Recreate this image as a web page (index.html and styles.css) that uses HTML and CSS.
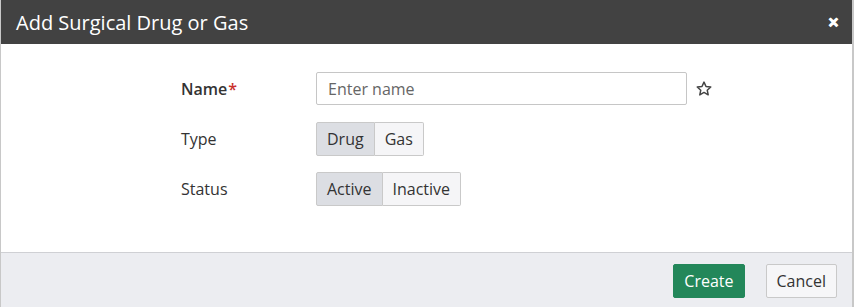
FILE: index.html
```html
<!DOCTYPE html>
<html>
<head>
<meta charset="utf-8">
<link rel="stylesheet" href="styles.css">
</head>
<body>
<div class="dialog">
  <div class="header">
    <span class="title">Add Surgical Drug or Gas</span>
    <span class="close">&#x2715;</span>
  </div>
  <div class="body">
    <div class="row">
      <label class="label strong">Name<span class="req">*</span></label>
      <input class="input" type="text" placeholder="Enter name">
      <svg class="star" width="18" height="18" viewBox="0 0 24 24"><path d="M12 2.8l2.7 5.8 6.3.7-4.7 4.3 1.3 6.2L12 16.6l-5.6 3.2 1.3-6.2L3 9.3l6.3-.7z" fill="none" stroke="#444" stroke-width="2" stroke-linejoin="round"/></svg>
    </div>
    <div class="row">
      <label class="label">Type</label>
      <div class="group">
        <span class="seg on">Drug</span><span class="seg">Gas</span>
      </div>
    </div>
    <div class="row">
      <label class="label">Status</label>
      <div class="group">
        <span class="seg on">Active</span><span class="seg">Inactive</span>
      </div>
    </div>
  </div>
  <div class="footer">
    <button class="btn primary">Create</button>
    <button class="btn">Cancel</button>
  </div>
</div>
</body>
</html>
```
FILE: styles.css
```css
html, body { margin: 0; padding: 0; background: #fff; }
body { font-family: "Open Sans", "Liberation Sans", sans-serif; color: #333; }
.dialog {
  width: 854px; height: 307px; box-sizing: border-box;
  border-left: 1px solid #c8c8c8; border-right: 2px solid #c8c8c8;
  display: flex; flex-direction: column;
}
.header {
  height: 44px; background: #424242; color: #fff;
  display: flex; align-items: center; justify-content: space-between;
  padding: 0 13px 0 15px; box-sizing: border-box; flex: none;
}
.title { font-size: 20px; }
.close { font-size: 13px; font-weight: bold; -webkit-text-stroke: 1px #fff; }
.body {
  flex: 1; padding: 28px 0 0 180px; display: flex; flex-direction: column; gap: 17px;
}
.row { display: flex; align-items: center; height: 33px; }
.label { width: 135px; font-size: 16px; color: #333; }
.strong { font-weight: 600; }
.req { color: #c9302c; margin-left: 1px; }
.input {
  width: 371px; height: 33px; box-sizing: border-box;
  border: 1px solid #c6c6c6; border-radius: 2px;
  padding: 0 11px; font-family: inherit; font-size: 16px; color: #333;
}
.input::placeholder { color: #666; }
.star { margin-left: 8px; }
.group { display: flex; }
.seg {
  height: 34px; box-sizing: border-box; display: flex; align-items: center;
  padding: 0 10px; font-size: 16px; color: #333;
  border: 1px solid #c9c9c9; background: #f5f5f7;
}
.seg + .seg { border-left: none; }
.seg:first-child { border-radius: 2px 0 0 2px; }
.seg:last-child { border-radius: 0 2px 2px 0; }
.seg.on { background: #dcdee3; }
.footer {
  height: 55px; flex: none; background: #ecedf1; border-top: 1px solid #cfd0d4;
  display: flex; align-items: center; justify-content: flex-end; gap: 21px;
  padding: 2px 15px 0 0; box-sizing: border-box;
}
.btn {
  height: 34px; padding: 0 10px; font-family: inherit; font-size: 16px;
  border: 1px solid #c9c9c9; border-radius: 2px; background: #f6f6f8; color: #333;
}
.btn.primary { background: #23875a; border-color: #23875a; color: #fff; }
```
